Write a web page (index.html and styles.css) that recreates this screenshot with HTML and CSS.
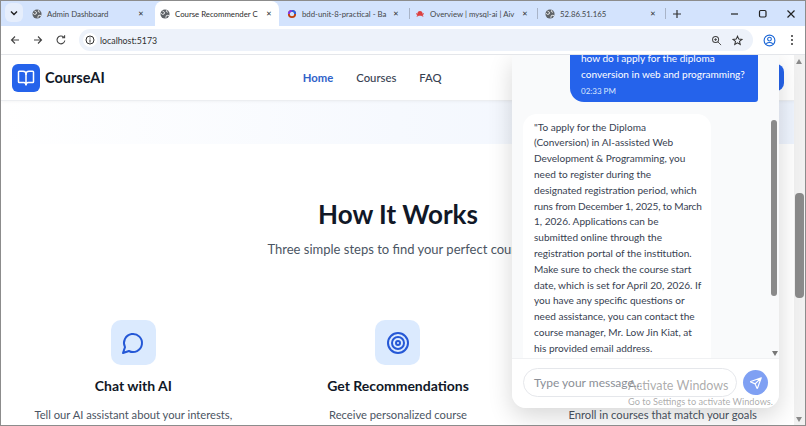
FILE: index.html
```html
<!DOCTYPE html>
<html lang="en">
<head>
<meta charset="utf-8">
<title>Course Recommender</title>
<link rel="stylesheet" href="styles.css">
</head>
<body>
<div class="window">
  <div class="tabstrip">
    <div class="tab-menu"><svg width="10" height="10" viewBox="0 0 10 10"><path d="M2 3.5 5 6.5 8 3.5" fill="none" stroke="#1f1f1f" stroke-width="1.4"/></svg></div>
    <div class="tab t1"><svg class="fav" viewBox="0 0 12 12"><use href="#globe"/></svg><span class="tab-title">Admin Dashboard</span><span class="tab-x">✕</span></div>
    <div class="tab active t2"><svg class="fav" viewBox="0 0 12 12"><use href="#globe"/></svg><span class="tab-title">Course Recommender C</span><span class="tab-x">✕</span></div>
    <div class="tab t3"><svg class="fav" viewBox="0 0 12 12"><circle cx="6" cy="6" r="3.8" fill="none" stroke="#c2410c" stroke-width="2.2"/><path d="M6 2.2A3.8 3.8 0 0 1 9.8 6" fill="none" stroke="#2563eb" stroke-width="2.2"/><path d="M2.2 6A3.8 3.8 0 0 1 6 2.2" fill="none" stroke="#7c3aed" stroke-width="2.2"/></svg><span class="tab-title">bdd-unit-8-practical - Ba</span><span class="tab-x">✕</span></div>
    <i class="tab-sep"></i>
    <div class="tab t4"><svg class="fav" viewBox="0 0 12 12"><path d="M6 2.5c2 0 3 1.4 3 3.2l1.6-.8v1.4L9 7.200 10.400 9H9L7.500 8h-3L3 9H1.600L3 7.200 1.400 6.300V4.900l1.600.8C3 3.900 4 2.500 6 2.500z" fill="#dc4040"/></svg><span class="tab-title">Overview | mysql-ai | Aiv</span><span class="tab-x">✕</span></div>
    <i class="tab-sep"></i>
    <div class="tab t5"><svg class="fav" viewBox="0 0 12 12"><use href="#globe"/></svg><span class="tab-title">52.86.51.165</span><span class="tab-x">✕</span></div>
    <i class="tab-sep"></i>
    <div class="new-tab"><svg width="10" height="10" viewBox="0 0 10 10"><path d="M5 1v8M1 5h8" stroke="#333" stroke-width="1.200"/></svg></div>
    <div class="win-controls">
      <svg width="10" height="10" viewBox="0 0 10 10"><path d="M1 5h7" stroke="#222" stroke-width="1.200"/></svg>
      <svg width="10" height="10" viewBox="0 0 10 10"><rect x="1.500" y="1.500" width="6.500" height="6.500" rx="1.200" fill="none" stroke="#222" stroke-width="1.200"/></svg>
      <svg width="10" height="10" viewBox="0 0 10 10"><path d="M1.500 1.500l7 7M8.500 1.500l-7 7" stroke="#222" stroke-width="1.200"/></svg>
    </div>
  </div>

  <div class="toolbar">
    <svg class="tb-icon" viewBox="0 0 12 12"><path d="M10 6H2.500M6 2.500 2.500 6 6 9.500" fill="none" stroke="#444" stroke-width="1.100"/></svg>
    <svg class="tb-icon" viewBox="0 0 12 12"><path d="M2 6h7.500M6 2.500 9.500 6 6 9.500" fill="none" stroke="#444" stroke-width="1.100"/></svg>
    <svg class="tb-icon" viewBox="0 0 12 12"><path d="M9.800 6.500A3.900 3.900 0 1 1 8.700 3.200M9.600 1.200v2.600H7" fill="none" stroke="#444" stroke-width="1.100"/></svg>
    <div class="omnibox">
      <span class="site-info"><svg width="10" height="10" viewBox="0 0 10 10"><circle cx="5" cy="5" r="4" fill="none" stroke="#333" stroke-width="1"/><path d="M5 4.500v3M5 2.500v1" stroke="#333" stroke-width="1"/></svg></span>
      <span class="url">localhost:5173</span>
      <svg class="omni-icon" viewBox="0 0 12 12"><circle cx="5" cy="5" r="3.300" fill="none" stroke="#444" stroke-width="1.100"/><path d="M7.500 7.500 11 11M3.500 5h3M5 3.500v3" stroke="#444" stroke-width="1"/></svg>
      <svg class="omni-icon" viewBox="0 0 12 12"><path d="M6 1.300 7.400 4.500l3.400.3-2.600 2.200.8 3.400L6 8.600 3 10.400l.8-3.400L1.200 4.800l3.400-.3z" fill="none" stroke="#333" stroke-width="1.100"/></svg>
    </div>
    <svg class="profile" viewBox="0 0 14 14"><circle cx="7" cy="7" r="5.800" fill="none" stroke="#1a66d6" stroke-width="1.200"/><circle cx="7" cy="5.500" r="2" fill="none" stroke="#1a66d6" stroke-width="1.200"/><path d="M3.500 10.500c1.800-1.800 5.200-1.800 7 0" fill="none" stroke="#1a66d6" stroke-width="1.200"/></svg>
    <svg class="kebab" viewBox="0 0 4 12"><circle cx="2" cy="2" r="1" fill="#333"/><circle cx="2" cy="6" r="1" fill="#333"/><circle cx="2" cy="10" r="1" fill="#333"/></svg>
  </div>

  <div class="viewport">
    <div class="page">
      <header class="site-header">
        <div class="brand">
          <span class="logo"><svg width="18" height="18" viewBox="0 0 24 24" fill="none" stroke="#fff" stroke-width="2" stroke-linecap="round" stroke-linejoin="round"><path d="M12 7v14"/><path d="M3 18a1 1 0 0 1-1-1V4a1 1 0 0 1 1-1h5a4 4 0 0 1 4 4 4 4 0 0 1 4-4h5a1 1 0 0 1 1 1v13a1 1 0 0 1-1 1h-6a3 3 0 0 0-3 3 3 3 0 0 0-3-3z"/></svg></span>
          <span class="brand-name">CourseAI</span>
        </div>
        <nav class="nav">
          <a class="nav-link current">Home</a>
          <a class="nav-link">Courses</a>
          <a class="nav-link">FAQ</a>
        </nav>
        <a class="cta"></a>
      </header>
      <div class="hero-tail"></div>
      <section class="how">
        <h1 class="how-title">How It Works</h1>
        <p class="how-sub">Three simple steps to find your perfect course</p>
        <div class="steps">
          <div class="step">
            <span class="step-icon"><svg width="24" height="24" viewBox="0 0 24 24" fill="none" stroke="#2558d6" stroke-width="2" stroke-linecap="round" stroke-linejoin="round"><path d="M7.900 20A9 9 0 1 0 4 16.100L2 22z"/></svg></span>
            <h3 class="step-title">Chat with AI</h3>
            <p class="step-text">Tell our AI assistant about your interests,</p>
          </div>
          <div class="step">
            <span class="step-icon"><svg width="24" height="24" viewBox="0 0 24 24" fill="none" stroke="#2558d6" stroke-width="2"><circle cx="12" cy="12" r="10"/><circle cx="12" cy="12" r="6"/><circle cx="12" cy="12" r="2"/></svg></span>
            <h3 class="step-title">Get Recommendations</h3>
            <p class="step-text">Receive personalized course</p>
          </div>
          <div class="step">
            <span class="step-icon"></span>
            <h3 class="step-title">Enroll</h3>
            <p class="step-text">Enroll in courses that match your goals</p>
          </div>
        </div>
      </section>
    </div>

    <div class="page-scrollbar">
      <i class="arrow up"></i>
      <i class="page-thumb"></i>
      <i class="arrow down"></i>
    </div>

    <aside class="chat">
      <div class="chat-messages">
        <div class="bubble user">
          <p>how do i apply for the diploma conversion in web and programming?</p>
          <time class="stamp">02:33 PM</time>
        </div>
        <div class="bubble bot">"To apply for the Diploma<br>(Conversion) in AI-assisted Web Development &amp; Programming, you need to register during the<br>designated registration period, which <span class="tight">runs from December 1, 2025, to March</span> 1, 2026. Applications can be submitted online through the registration portal of the institution. Make sure to check the course start date, which is set for April 20, 2026. If you have any specific questions or need assistance, you can contact the course manager, Mr. Low Jin Kiat, at his provided email address.</div>
        <i class="chat-thumb"></i>
        <i class="arrow chat-down"></i>
      </div>
      <div class="chat-input">
        <div class="input-pill">Type your message...</div>
        <span class="send"><svg width="14" height="14" viewBox="0 0 24 24" fill="none" stroke="#fff" stroke-width="2" stroke-linecap="round" stroke-linejoin="round"><path d="M21 3 10.500 13.500M21 3l-6.500 18a.5.5 0 0 1-.9 0L10.500 13.500 3 10.400a.5.500 0 0 1 0-.9z"/></svg></span>
      </div>
    </aside>

    <div class="activate">
      <div class="activate-title">Activate Windows</div>
      <div class="activate-sub">Go to Settings to activate Windows.</div>
    </div>
  </div>
</div>

<svg class="defs" width="0" height="0">
  <symbol id="globe" viewBox="0 0 12 12">
    <circle cx="6" cy="6" r="5.500" fill="#5f6368"/>
    <path d="M3 2.500 5.500 4 5 6 3 6.500 1 5M7 10.500 7.500 8 9.500 7.500 11 8M8 1.500 7.500 3 9.500 4" fill="none" stroke="#fff" stroke-width="1"/>
  </symbol>
</svg>
</body>
</html>
```
FILE: styles.css
```css
* { box-sizing: border-box; }
html, body { margin: 0; padding: 0; width: 806px; height: 426px; overflow: hidden; background: #fff; }
body { font-family: Lato, Roboto, sans-serif; color: #111827; }
p, h1, h3 { margin: 0; }
i { display: block; }
.defs { position: absolute; }

.window { width: 806px; height: 426px; display: flex; flex-direction: column; border: 1px solid #8c8c8c; }

.tabstrip { height: 25px; background: #d3e3fd; display: flex; align-items: center; padding-left: 4px; flex: none; }
.tab-menu { width: 18px; height: 19px; border-radius: 6px; background: #e6eefc; display: flex; align-items: center; justify-content: center; margin-top: -2px; flex: none; }
.tab { display: flex; align-items: center; height: 25px; font-size: 7.800px; color: #44474a; flex: none; }
.tab-title { flex: 1; white-space: nowrap; }
.fav { width: 10px; height: 10px; margin-right: 5px; flex: none; }
.tab-x { font-size: 7px; color: #333; }
.t1 { width: 132px; padding: 0 11px 0 9px; }
.t2 { width: 124px; background: #fff; border-radius: 8px 8px 0 0; padding: 0 7px 0 5px; color: #2c2c2c; }
.t3 { width: 130px; padding: 0 10px 0 4px; }
.t3 .fav { margin-left: 4px; }
.t4 { width: 127px; padding: 0 9px 0 5px; }
.t5 { width: 127px; padding: 0 9px 0 7px; }
.tab-sep { width: 1px; height: 11px; background: #a9b4c8; flex: none; }
.new-tab { width: 21px; display: flex; justify-content: center; flex: none; }
.win-controls { margin-left: auto; display: flex; gap: 18px; padding-right: 9px; align-items: center; }

.toolbar { height: 29px; display: flex; align-items: center; background: #fff; padding-left: 8px; flex: none; border-bottom: 1px solid #e4e6ea; }
.tb-icon { width: 12px; height: 12px; margin-right: 11px; flex: none; }
.omnibox { width: 674px; height: 22px; margin-left: 1px; border-radius: 11px; background: #edf2fa; display: flex; align-items: center; flex: none; }
.site-info { width: 14px; height: 14px; margin-left: 4px; border-radius: 50%; background: #fff; display: flex; align-items: center; justify-content: center; }
.url { font-size: 8.800px; color: #303030; margin-left: 3px; flex: 1; }
.omni-icon { width: 11px; height: 11px; margin-right: 10px; flex: none; }
.profile { width: 13px; height: 13px; margin-left: 10px; flex: none; }
.kebab { width: 4px; height: 12px; margin-left: 14px; flex: none; }

.viewport { position: relative; flex: 1; overflow: hidden; }
.page { width: 794px; }
.site-header { height: 46px; display: flex; align-items: center; padding: 0 11px; border-bottom: 1px solid #eceef1; box-shadow: 0 1px 3px rgba(0,0,0,.04); position: relative; }
.brand { display: flex; align-items: center; gap: 5px; }
.logo { width: 28px; height: 28px; border-radius: 6px; background: #2563eb; display: flex; align-items: center; justify-content: center; }
.brand-name { font-size: 14.500px; font-weight: 700; color: #111827; }
.nav { display: flex; gap: 23px; margin-left: 198px; font-size: 11.300px; font-weight: 500; color: #374151; }
.nav-link.current { color: #2f62c9; font-weight: 700; }
.cta { margin-left: auto; width: 160px; height: 27px; background: #2563eb; border-radius: 8px; }

.hero-tail { height: 43px; background: linear-gradient(90deg, #fff 0%, #f6f9fe 50%, #eef4fe 100%); }
.how { padding: 53px 16px 0; text-align: center; }
.how-title { font-size: 26px; font-weight: 700; line-height: 34px; color: #111827; }
.how-sub { font-size: 13px; line-height: 20px; color: #4b5563; margin-top: 8px; }
.steps { display: grid; grid-template-columns: repeat(3, 1fr); gap: 32px; margin-top: 61px; }
.step { display: flex; flex-direction: column; align-items: center; }
.step-icon { width: 45px; height: 45px; border-radius: 10px; background: #dbeafe; display: flex; align-items: center; justify-content: center; }
.step-title { font-size: 14px; font-weight: 700; line-height: 20px; margin-top: 11px; color: #111827; }
.step-text { font-size: 11.200px; line-height: 16px; margin-top: 11px; color: #4b5563; white-space: nowrap; }

.page-scrollbar { position: absolute; right: 0; top: 0; bottom: 0; width: 11px; background: #f1f1f1; }
.page-thumb { position: absolute; left: 1px; right: 1px; top: 138px; height: 105px; background: #8a8a8a; border-radius: 4px; }
.arrow { position: absolute; width: 0; height: 0; border-left: 3.500px solid transparent; border-right: 3.500px solid transparent; }
.arrow.up { top: 4px; left: 2px; border-bottom: 5px solid #8a8a8a; }
.arrow.down { bottom: 3px; left: 2px; border-top: 5px solid #8a8a8a; }

.chat { position: absolute; left: 511px; top: 0; width: 267px; height: 353px; background: #f9fafb; border-radius: 0 0 14px 14px; box-shadow: 0 8px 24px rgba(0,0,0,.16); display: flex; flex-direction: column; overflow: hidden; }
.chat-messages { position: relative; flex: 1; overflow: hidden; padding: 0 21px 0 11px; display: flex; flex-direction: column; gap: 12px; }
.bubble { width: 188px; font-size: 10.050px; line-height: 15.800px; padding: 0 7px 0 11px; flex: none; }
.tight { white-space: nowrap; letter-spacing: -.12px; }
.user { background: #2563eb; color: #fff; align-self: flex-end; border-radius: 0 0 3px 14px; margin-top: -4px; padding-bottom: 3px; }
.stamp { display: block; font-size: 8px; line-height: 15px; margin-top: 1px; color: #dbe6fd; }
.bot { background: #fff; color: #374151; border-radius: 14px 14px 0 0; padding-top: 6px; padding-bottom: 30px; }
.chat-thumb { position: absolute; right: 2px; top: 65px; width: 6px; height: 176px; background: #8a8a8a; border-radius: 3px; }
.chat-down { right: 1px; bottom: 2px; border-top: 5px solid #777; }

.chat-input { height: 50px; background: #fff; display: flex; align-items: center; gap: 6px; padding: 0 11px 2px; flex: none; border-top: 1px solid #f0f1f3; }
.input-pill { width: 214px; height: 29px; border: 1px solid #e5e7eb; border-radius: 15px; font-size: 12px; line-height: 27px; padding-left: 10px; color: #8b8f97; white-space: nowrap; overflow: hidden; }
.send { width: 25px; height: 25px; border-radius: 50%; background: #7fa0f3; display: flex; align-items: center; justify-content: center; flex: none; }

.activate { position: absolute; left: 627px; top: 322px; color: rgba(120,120,120,.62); pointer-events: none; white-space: nowrap; }
.activate-title { font-size: 12.500px; line-height: 18px; }
.activate-sub { font-size: 9.200px; line-height: 12px; margin-top: 1px; }
```
